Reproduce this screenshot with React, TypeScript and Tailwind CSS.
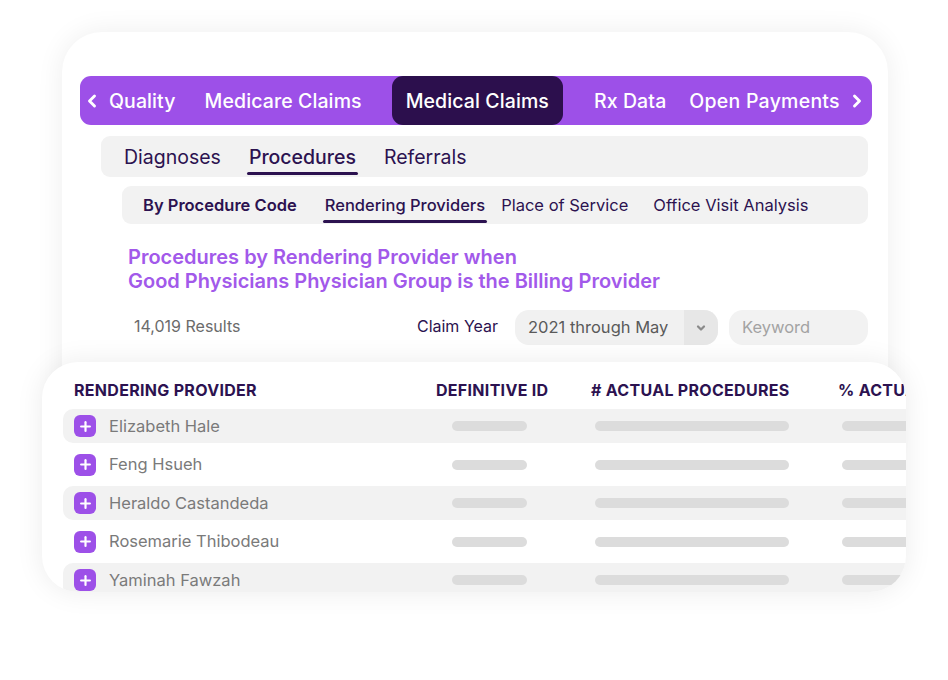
import { ChevronLeft, ChevronRight, ChevronDown, Plus } from "lucide-react";

const ROWS = [
  { name: "Elizabeth Hale", shade: true },
  { name: "Feng Hsueh", shade: false },
  { name: "Heraldo Castandeda", shade: true },
  { name: "Rosemarie Thibodeau", shade: false },
  { name: "Yaminah Fawzah", shade: true },
];

export default function App() {
  return (
    <div className="w-[948px] h-[680px] bg-white overflow-hidden pt-[32px] pl-[62px] font-['Inter',sans-serif]">
      {/* back card: tabs + filters */}
      <div className="w-[826px] rounded-[40px] bg-white shadow-[0_0_28px_rgba(0,0,0,0.07)] pt-[44px] pl-[18px] pr-[16px] pb-[135px]">
        <div className="h-[49px] rounded-[11px] bg-[#9d50e8] flex items-center text-white text-[19.5px] font-medium tracking-[0.1px]">
          <ChevronLeft className="ml-[2px] w-[20px] h-[20px]" strokeWidth={3.5} />
          <span className="ml-[7px] pt-[3px]">Quality</span>
          <span className="ml-[29px] pt-[3px]">Medicare Claims</span>
          <span className="ml-[30px] h-full px-[14px] pt-[3px] rounded-[11px] bg-[#2c0f4d] flex items-center">Medical Claims</span>
          <span className="ml-[31px] pt-[3px]">Rx Data</span>
          <span className="ml-[23px] pt-[3px] tracking-[0.25px]">Open Payments</span>
          <ChevronRight className="ml-[7px] w-[20px] h-[20px]" strokeWidth={3.5} />
        </div>

        <div className="ml-[21px] mr-[4px] mt-[11px] h-[41px] rounded-[9px] bg-[#f2f2f2] flex items-center pl-[23px] pt-[3px] text-[19.5px] text-[#2c1250]">
          <span>Diagnoses</span>
          <span className="ml-[28px] h-full flex items-center relative font-medium">
            Procedures
            <span className="absolute left-[-2px] right-[-2px] bottom-[2px] h-[3px] rounded-full bg-[#2c1250]" />
          </span>
          <span className="ml-[28px]">Referrals</span>
        </div>

        <div className="ml-[42px] mr-[4px] mt-[9px] h-[38px] rounded-[9px] bg-[#f2f2f2] flex items-center pl-[21px] pt-[1px] text-[16.5px] text-[#2c1250]">
          <span className="font-semibold">By Procedure Code</span>
          <span className="ml-[28px] h-full flex items-center relative font-medium">
            Rendering Providers
            <span className="absolute left-[-2px] right-[-2px] bottom-[1px] h-[3px] rounded-full bg-[#2c1250]" />
          </span>
          <span className="ml-[16px]">Place of Service</span>
          <span className="ml-[25px]">Office Visit Analysis</span>
        </div>

        <h2 className="ml-[48px] mt-[21px] text-[20px] leading-[24px] font-semibold text-[#a259ea]">
          Procedures by Rendering Provider when
          <br />
          Good Physicians Physician Group is the Billing Provider
        </h2>

        <div className="mt-[17px] ml-[54px] mr-[4px] flex items-center h-[35px]">
          <span className="text-[16px] text-[#6b6b6b] -mt-[4px]">14,019 Results</span>
          <span className="ml-auto text-[16px] text-[#2c1250] -mt-[3px]">Claim Year</span>
          <div className="ml-[17px] w-[203px] h-[35px] rounded-[14px] bg-[#f1f1f1] flex items-center overflow-hidden">
            <span className="pl-[13px] flex-1 text-[16.5px] text-[#5a5a5a]">2021 through May</span>
            <span className="w-[34px] h-full bg-[#e7e7e7] flex items-center justify-center text-[#8a8a8a]">
              <ChevronDown className="w-[12px] h-[12px]" strokeWidth={4.5} />
            </span>
          </div>
          <div className="ml-[11px] w-[139px] h-[35px] rounded-[14px] bg-[#f2f2f2] flex items-center pl-[13px] text-[16.5px] text-[#a3a3a3]">
            Keyword
          </div>
        </div>
      </div>

      {/* front card: table */}
      <div className="relative -ml-[20px] -mt-[118px] w-[864px] h-[230px] rounded-[36px] bg-white shadow-[0_0_28px_rgba(0,0,0,0.08)] overflow-hidden">
        <div className="ml-[21px] pl-[11px] pt-[18px] pb-[9px] grid grid-cols-[362px_155px_247px_200px] text-[16px] leading-[20px] font-bold tracking-[0.3px] text-[#2c1250] whitespace-nowrap">
          <span>RENDERING PROVIDER</span>
          <span>DEFINITIVE ID</span>
          <span># ACTUAL PROCEDURES</span>
          <span>% ACTUAL</span>
        </div>
        {ROWS.map((r) => (
          <div
            key={r.name}
            className={
              r.shade
                ? "ml-[21px] h-[34px] rounded-l-[10px] bg-[#f2f2f2] pl-[11px] grid grid-cols-[362px_155px_247px_200px] items-center"
                : "ml-[21px] h-[43px] pl-[11px] grid grid-cols-[362px_155px_247px_200px] items-center"
            }
          >
            <div className="flex items-center">
              <span className="w-[22px] h-[22px] rounded-[6px] bg-[#9d50e8] flex items-center justify-center text-white">
                <Plus className="w-[15px] h-[15px]" strokeWidth={3.5} />
              </span>
              <span className="ml-[13px] text-[16.5px] text-[#7a7a7a]">{r.name}</span>
            </div>
            <span className="ml-[16px] w-[75px] h-[10px] rounded-full bg-[#dcdcdc]" />
            <span className="ml-[4px] w-[194px] h-[10px] rounded-full bg-[#dcdcdc]" />
            <span className="ml-[4px] w-[100px] h-[10px] rounded-full bg-[#dcdcdc]" />
          </div>
        ))}
      </div>
    </div>
  );
}
